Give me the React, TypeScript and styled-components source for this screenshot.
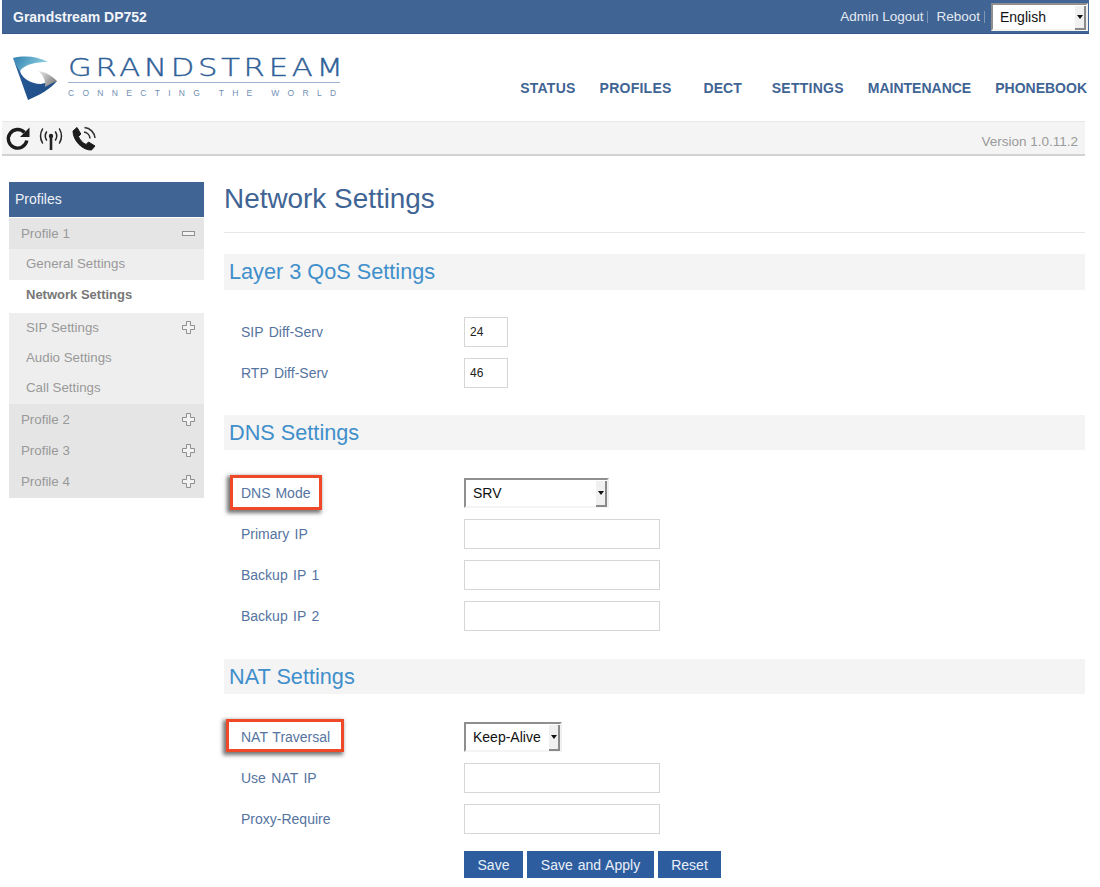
import React from "react";
import styled, { createGlobalStyle } from "styled-components";

const GlobalStyle = createGlobalStyle`
  html, body {
    margin: 0;
    padding: 0;
    background: #fff;
    font-family: "Liberation Sans", Arial, sans-serif;
    font-size: 14px;
  }
`;

const Page = styled.div`
  width: 1100px;
  height: 887px;
  overflow: hidden;
  padding-left: 2px;
  box-sizing: border-box;
`;

const TopBar = styled.header`
  width: 1087px;
  height: 34px;
  box-sizing: border-box;
  background: #406494;
  border-bottom: 1px solid #35588a;
  display: flex;
  align-items: center;
  justify-content: space-between;
  padding-left: 11px;
  padding-right: 1px;
`;

const Product = styled.div`
  color: #f2f5f9;
  font-size: 14px;
  font-weight: bold;
`;

const TopActions = styled.div`
  display: flex;
  align-items: center;
  color: #e4eaf2;
  font-size: 13.5px;
`;

const TopLink = styled.span`
  padding-right: 4px;
  margin-right: 8px;
  border-right: 1px solid #7d97bb;
  line-height: 12px;
  &:last-of-type {
    margin-right: 6px;
  }
`;

const Caret = styled.span`
  width: 0;
  height: 0;
  border-left: 3.5px solid transparent;
  border-right: 3.5px solid transparent;
  border-top: 4px solid #111;
`;

const SelectBox = styled.div<{ $width: number; $height: number }>`
  width: ${(p) => p.$width}px;
  height: ${(p) => p.$height}px;
  box-sizing: border-box;
  background: #fff;
  border: 2px solid;
  border-color: #8f8f8f #f0f0f0 #f4f4f4 #8f8f8f;
  color: #111;
  font-size: 14px;
  display: flex;
  align-items: center;
  justify-content: space-between;
  padding-left: 7px;
`;

const SelectButton = styled.span`
  width: 11px;
  align-self: stretch;
  margin: 1px 0 -1px;
  box-sizing: border-box;
  background: #f0f0f0;
  border-right: 2px solid #8a8a8a;
  border-bottom: 2px solid #8a8a8a;
  display: flex;
  align-items: center;
  justify-content: center;
`;

const BrandRow = styled.div`
  width: 1087px;
  height: 87px;
  display: flex;
  justify-content: space-between;
`;

const Logo = styled.div`
  display: flex;
  margin: 21px 0 0 10px;
  height: 48px;
`;

const LogoText = styled.div`
  margin: 0 0 0 9px;
  width: 272px;
  color: #2f5f98;
`;

const LogoName = styled.div`
  font-family: "DejaVu Sans", "Liberation Sans", sans-serif;
  font-weight: 200;
  font-size: 24.5px;
  line-height: 26px;
  letter-spacing: 3px;
  white-space: nowrap;
  transform: scaleX(1.25);
  transform-origin: left center;
  -webkit-text-stroke: 0.4px #2f5f98;
`;

const LogoRule = styled.div`
  height: 1px;
  margin-top: 1px;
  background: #9db3cf;
`;

const LogoTag = styled.div`
  font-size: 8.5px;
  line-height: 10px;
  letter-spacing: 8.3px;
  margin-top: 5px;
  color: #7290b4;
  white-space: nowrap;
`;

const Nav = styled.nav`
  display: flex;
  gap: 24px;
  align-items: center;
  height: 16px;
  margin-top: 46px;
  padding-right: 2px;
`;

const NavItem = styled.span<{ $left?: number; $right?: number; $wide?: boolean }>`
  color: #406494;
  font-size: 14px;
  font-weight: bold;
  letter-spacing: ${(p) => (p.$wide ? 0.25 : 0)}px;
  padding: 0 ${(p) => p.$right ?? 0}px 0 ${(p) => p.$left ?? 0}px;
`;

const ToolBar = styled.div`
  width: 1083px;
  height: 35px;
  box-sizing: border-box;
  background: #f4f4f4;
  border-top: 1px solid #e9e9e9;
  border-bottom: 2px solid #d2d2d2;
  display: flex;
  align-items: center;
  justify-content: space-between;
  padding: 0 7px 0 3px;
`;

const ToolIcons = styled.div`
  display: flex;
  align-items: center;
  gap: 6px;
`;

const Version = styled.span`
  color: #9a9a9a;
  font-size: 13.5px;
  margin-top: 6px;
`;

const Body = styled.div`
  display: flex;
  align-items: flex-start;
  margin-top: 26px;
  padding-left: 7px;
`;

const Sidebar = styled.aside`
  width: 195px;
  flex: none;
`;

const SideHead = styled.div`
  height: 35px;
  margin-bottom: 1px;
  box-sizing: border-box;
  background: #406494;
  color: #eef2f7;
  font-size: 14px;
  display: flex;
  align-items: center;
  padding: 0 0 1px 6px;
`;

const rowBottom = { group: 1, sub: 2, active: 5 };

const SideRow = styled.div<{ $kind: "group" | "sub" | "active"; $h: number }>`
  height: ${(p) => p.$h}px;
  box-sizing: border-box;
  display: flex;
  align-items: center;
  justify-content: space-between;
  font-size: ${(p) => (p.$kind === "active" ? 13 : 13.3)}px;
  padding: 0 9px ${(p) => rowBottom[p.$kind]}px ${(p) => (p.$kind === "group" ? 12 : 17)}px;
  background: ${(p) =>
    p.$kind === "group" ? "#e5e5e5" : p.$kind === "sub" ? "#eeeeee" : "#fff"};
  color: ${(p) => (p.$kind === "active" ? "#777" : "#999")};
  font-weight: ${(p) => (p.$kind === "active" ? "bold" : "normal")};
`;

const Main = styled.main`
  width: 861px;
  margin-left: 20px;
  flex: none;
`;

const Title = styled.h1`
  margin: 0 0 21px;
  height: 51px;
  box-sizing: border-box;
  border-bottom: 1px solid #e6e6e6;
  color: #406494;
  font-size: 27.9px;
  font-weight: normal;
  line-height: 33px;
`;

const Section = styled.section<{ $after: number }>`
  margin-bottom: ${(p) => p.$after}px;
`;

const SectionTitle = styled.h2<{ $h: number; $below?: number }>`
  margin: 0 0 ${(p) => p.$below ?? 22}px;
  height: ${(p) => p.$h}px;
  background: #f4f4f4;
  color: #3f8fcb;
  font-size: 21.7px;
  font-weight: normal;
  line-height: ${(p) => p.$h}px;
  padding-left: 5px;
`;

const Row = styled.div`
  height: 41px;
  display: flex;
  align-items: center;
`;

const LabelCell = styled.div`
  width: 240px;
  flex: none;
  display: flex;
  align-items: center;
  color: #55749f;
  font-size: 14px;
  word-spacing: 1.5px;
`;

const LabelText = styled.span`
  margin-left: 17px;
`;

const Callout = styled.span<{ $left: number; $width: number; $height: number; $lift?: number }>`
  display: flex;
  align-items: center;
  box-sizing: border-box;
  width: ${(p) => p.$width}px;
  height: ${(p) => p.$height}px;
  margin-left: ${(p) => p.$left}px;
  margin-bottom: ${(p) => p.$lift ?? 0}px;
  padding-left: ${(p) => 14 - p.$left}px;
  padding-top: ${(p) => p.$lift ?? 0}px;
  border: 3px solid #f0492a;
  box-shadow: -2px 2px 4px 1px rgba(40, 40, 40, 0.65);
  background: #fff;
  word-spacing: 1px;
`;

const TextInput = styled.div<{ $small?: boolean }>`
  width: ${(p) => (p.$small ? 44 : 196)}px;
  height: 30px;
  box-sizing: border-box;
  border: 1px solid #d6d6d6;
  background: #fff;
  color: #222;
  font-size: 12px;
  display: flex;
  align-items: center;
  padding-left: 5px;
`;

const Actions = styled.div`
  display: flex;
  gap: 4px;
  margin: -9px 0 0 240px;
`;

const ActionButton = styled.div<{ $width: number }>`
  width: ${(p) => p.$width}px;
  height: 27px;
  background: #2d5d9f;
  color: #eaf0f7;
  font-size: 14px;
  word-spacing: 1px;
  display: flex;
  align-items: center;
  justify-content: center;
`;

const Select = ({ value, width, height }: { value: string; width: number; height: number }) => (
  <SelectBox $width={width} $height={height}>
    {value}
    <SelectButton>
      <Caret />
    </SelectButton>
  </SelectBox>
);

const LogoMark = () => (
  <svg width="47" height="47" viewBox="0 0 47 47">
    <defs>
      <linearGradient id="logoTop" x1="0" y1="0" x2="1" y2="0.3">
        <stop offset="0" stopColor="#2f7fb0" />
        <stop offset="1" stopColor="#8fd0e0" />
      </linearGradient>
      <linearGradient id="logoBody" x1="0" y1="0" x2="0.6" y2="1">
        <stop offset="0" stopColor="#2c5f9c" />
        <stop offset="1" stopColor="#1f4e88" />
      </linearGradient>
      <linearGradient id="logoGrey" x1="0" y1="0" x2="1" y2="0.6">
        <stop offset="0" stopColor="#eeeeee" />
        <stop offset="1" stopColor="#808080" />
      </linearGradient>
    </defs>
    <path
      d="M1 3 L16 45 C28 40 38 34 45 26 C39 26 34 28 29 29 C18 29 9 22 8 16 C6 12 3 8 1 3 Z"
      fill="url(#logoBody)"
    />
    <path d="M1 3 C14 0 27 2 36 7 C24 7 13 9 8 16 C5 12 3 8 1 3 Z" fill="url(#logoTop)" />
    <path d="M26 16 C34 17 40 21 45 26 C40 28 37 30 33 32 C34 25 31 20 26 16 Z" fill="url(#logoGrey)" />
  </svg>
);

const RefreshIcon = () => (
  <svg width="26" height="26" viewBox="0 0 26 26" fill="none">
    <path d="M19.5 7.5 A9.3 9.3 0 1 0 21.8 15.5" stroke="#1c1c1c" strokeWidth="3.4" />
    <path d="M24.5 2.5 V12 H15 Z" fill="#1c1c1c" />
  </svg>
);

const AntennaIcon = () => (
  <svg width="28" height="26" viewBox="0 0 28 26" fill="none" stroke="#222" strokeLinecap="round">
    <circle cx="14" cy="11" r="2.2" fill="#222" stroke="none" />
    <path d="M14 11 V25" strokeWidth="2.6" strokeLinecap="butt" />
    <path d="M9.5 7 Q7 11 9.5 15 M18.5 7 Q21 11 18.5 15" strokeWidth="1.5" />
    <path d="M5.5 4 Q1.5 11 5.5 18 M22.5 4 Q26.5 11 22.5 18" strokeWidth="1.5" />
  </svg>
);

const PhoneIcon = () => (
  <svg width="28" height="26" viewBox="0 0 28 26" fill="none">
    <path
      d="M2 6 L6 2.5 L9.8 9 L7.5 11.5 C8.5 14.5 11.5 18 15 19.5 L17.5 17 L24 21 L20.5 25 C12 25.5 2 16 2 6 Z"
      fill="#1c1c1c"
      stroke="#1c1c1c"
      strokeLinejoin="round"
    />
    <path d="M13 7 A7 7 0 0 1 19 13.5" stroke="#333" strokeWidth="1.6" />
    <path d="M13.5 2.5 A11.5 11.5 0 0 1 24 13" stroke="#333" strokeWidth="1.6" />
  </svg>
);

const PlusIcon = () => (
  <svg width="13" height="13" viewBox="0 0 13 13" fill="#f2f2f2" stroke="#8f8f8f">
    <path d="M4.5 0.5 H8.5 V4.5 H12.5 V8.5 H8.5 V12.5 H4.5 V8.5 H0.5 V4.5 H4.5 Z" />
  </svg>
);

const MinusIcon = () => (
  <svg width="13" height="13" viewBox="0 0 13 13" fill="#f2f2f2" stroke="#8f8f8f">
    <rect x="0.5" y="4.5" width="12" height="4" />
  </svg>
);

const App = () => {
  return (
    <Page>
      <GlobalStyle />
      <TopBar>
        <Product>Grandstream DP752</Product>
        <TopActions>
          <TopLink>Admin Logout</TopLink>
          <TopLink>Reboot</TopLink>
          <Select value="English" width={97} height={28} />
        </TopActions>
      </TopBar>

      <BrandRow>
        <Logo>
          <LogoMark />
          <LogoText>
            <LogoName>GRANDSTREAM</LogoName>
            <LogoRule />
            <LogoTag>CONNECTING THE WORLD</LogoTag>
          </LogoText>
        </Logo>
        <Nav>
          <NavItem $wide>STATUS</NavItem>
          <NavItem $wide>PROFILES</NavItem>
          <NavItem $left={8} $right={6}>DECT</NavItem>
          <NavItem $wide>SETTINGS</NavItem>
          <NavItem>MAINTENANCE</NavItem>
          <NavItem>PHONEBOOK</NavItem>
        </Nav>
      </BrandRow>

      <ToolBar>
        <ToolIcons>
          <RefreshIcon />
          <AntennaIcon />
          <PhoneIcon />
        </ToolIcons>
        <Version>Version 1.0.11.2</Version>
      </ToolBar>

      <Body>
        <Sidebar>
          <SideHead>Profiles</SideHead>
          <SideRow $kind="group" $h={31}>
            Profile 1
            <MinusIcon />
          </SideRow>
          <SideRow $kind="sub" $h={31}>General Settings</SideRow>
          <SideRow $kind="active" $h={33}>Network Settings</SideRow>
          <SideRow $kind="sub" $h={30}>
            SIP Settings
            <PlusIcon />
          </SideRow>
          <SideRow $kind="sub" $h={30}>Audio Settings</SideRow>
          <SideRow $kind="sub" $h={31}>Call Settings</SideRow>
          <SideRow $kind="group" $h={31}>
            Profile 2
            <PlusIcon />
          </SideRow>
          <SideRow $kind="group" $h={31}>
            Profile 3
            <PlusIcon />
          </SideRow>
          <SideRow $kind="group" $h={32}>
            Profile 4
            <PlusIcon />
          </SideRow>
        </Sidebar>

        <Main>
          <Title>Network Settings</Title>

          <Section $after={22}>
            <SectionTitle $h={36} $below={21}>Layer 3 QoS Settings</SectionTitle>
            <Row>
              <LabelCell><LabelText>SIP Diff-Serv</LabelText></LabelCell>
              <TextInput $small>24</TextInput>
            </Row>
            <Row>
              <LabelCell><LabelText>RTP Diff-Serv</LabelText></LabelCell>
              <TextInput $small>46</TextInput>
            </Row>
          </Section>

          <Section $after={23}>
            <SectionTitle $h={35}>DNS Settings</SectionTitle>
            <Row>
              <LabelCell>
                <Callout $left={6} $width={92} $height={35}>DNS Mode</Callout>
              </LabelCell>
              <Select value="SRV" width={145} height={30} />
            </Row>
            <Row>
              <LabelCell><LabelText>Primary IP</LabelText></LabelCell>
              <TextInput />
            </Row>
            <Row>
              <LabelCell><LabelText>Backup IP 1</LabelText></LabelCell>
              <TextInput />
            </Row>
            <Row>
              <LabelCell><LabelText>Backup IP 2</LabelText></LabelCell>
              <TextInput />
            </Row>
          </Section>

          <Section $after={21}>
            <SectionTitle $h={35}>NAT Settings</SectionTitle>
            <Row>
              <LabelCell>
                <Callout $left={2} $width={118} $height={33} $lift={3}>NAT Traversal</Callout>
              </LabelCell>
              <Select value="Keep-Alive" width={98} height={30} />
            </Row>
            <Row>
              <LabelCell><LabelText>Use NAT IP</LabelText></LabelCell>
              <TextInput />
            </Row>
            <Row>
              <LabelCell><LabelText>Proxy-Require</LabelText></LabelCell>
              <TextInput />
            </Row>
          </Section>

          <Actions>
            <ActionButton $width={59}>Save</ActionButton>
            <ActionButton $width={127}>Save and Apply</ActionButton>
            <ActionButton $width={63}>Reset</ActionButton>
          </Actions>
        </Main>
      </Body>
    </Page>
  );
};

export default App;
